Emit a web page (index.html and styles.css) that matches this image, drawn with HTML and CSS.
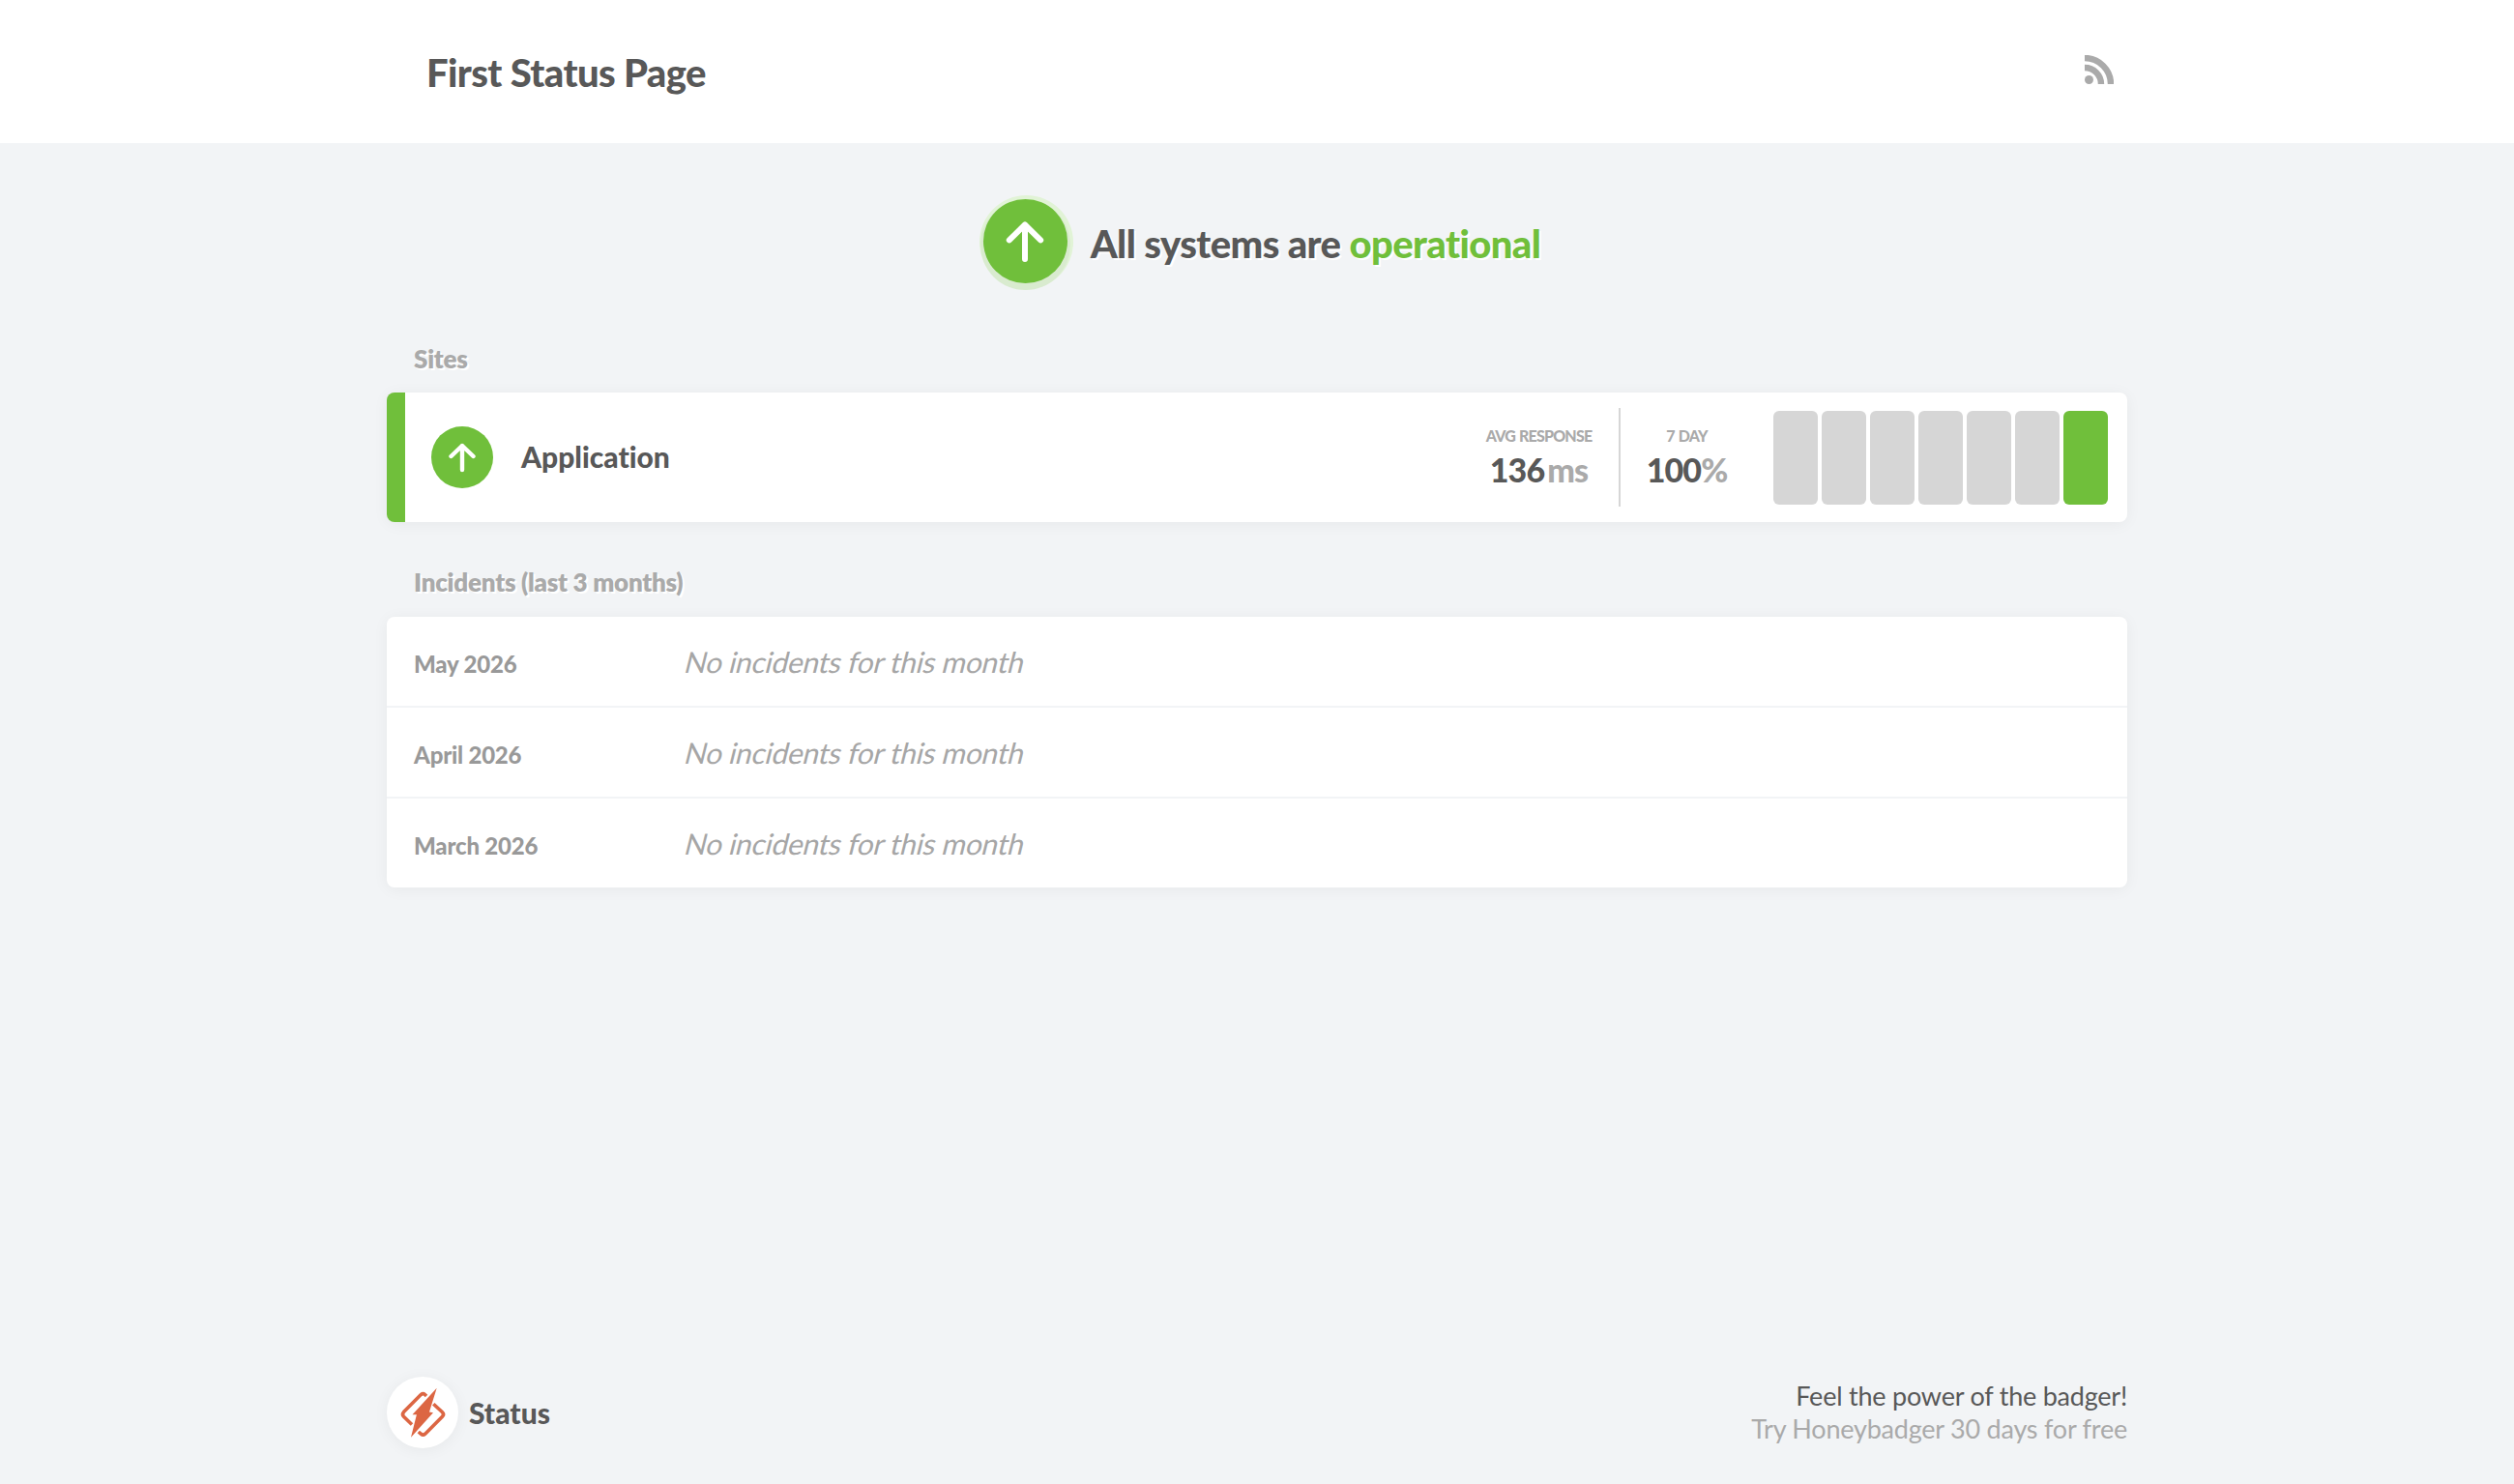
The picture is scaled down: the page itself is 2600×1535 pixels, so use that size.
FILE: index.html
```html
<!DOCTYPE html>
<html lang="en">

<head>
    <meta charset="UTF-8" />
    <meta name="viewport" content="width=device-width, initial-scale=1.0" />
    <title>First Status Page</title>
    <link rel="stylesheet" href="styles.css">
</head>

<body>
    <header class="header">
        <div class="wrap header-inner">
            <h1 class="title">First Status Page</h1>
            <a class="feed" href="#" aria-label="Feed">
                <svg width="30" height="30" viewBox="0 0 30 30">
                    <circle cx="4.5" cy="25.5" r="4.5" fill="#aaa" />
                    <path d="M0 13A17 17 0 0 1 17 30M0 3A27 27 0 0 1 27 30" fill="none" stroke="#aaa" stroke-width="6.4" />
                </svg>
            </a>
        </div>
    </header>

    <main class="wrap main">
        <div class="hero">
            <div class="badge badge-big">
                <svg width="40" height="44" viewBox="0 0 40 44">
                    <path d="M20 40V4.400M3.800 20.400L20 4.400L36.200 20.400" />
                </svg>
            </div>
            <h2 class="hero-text">All systems are <span class="green">operational</span></h2>
        </div>

        <h3 class="section-title">Sites</h3>
        <div class="card site">
            <div class="badge">
                <svg width="28" height="31" viewBox="0 0 28 31">
                    <path d="M14 28V3M2.5 14L14 3L25.5 14" />
                </svg>
            </div>
            <div class="site-name">Application</div>
            <div class="stat stat-response">
                <div class="stat-label">AVG RESPONSE</div>
                <div class="stat-value">136<span class="unit unit-ms">ms</span></div>
            </div>
            <div class="stat stat-week">
                <div class="stat-label">7 DAY</div>
                <div class="stat-value">100<span class="unit">%</span></div>
            </div>
            <div class="days">
                <div class="day"></div>
                <div class="day"></div>
                <div class="day"></div>
                <div class="day"></div>
                <div class="day"></div>
                <div class="day"></div>
                <div class="day day-up"></div>
            </div>
        </div>

        <h3 class="section-title section-incidents">Incidents (last 3 months)</h3>
        <div class="card incidents">
            <div class="row">
                <div class="month">May 2026</div>
                <div class="none">No incidents for this month</div>
            </div>
            <div class="row">
                <div class="month">April 2026</div>
                <div class="none">No incidents for this month</div>
            </div>
            <div class="row">
                <div class="month">March 2026</div>
                <div class="none">No incidents for this month</div>
            </div>
        </div>
    </main>

    <footer class="wrap footer">
        <div class="brand">
            <div class="logo">
                <svg width="74" height="74" viewBox="0 0 74 74">
                    <path d="M41 20L39.500 18.500Q37.500 16.800 35.300 18.600L17.500 36.600Q15.400 39 17.500 41.300L26 49.500M48.300 28.200L57.500 36.800Q59.700 39 57.500 41.300L39.700 59.200Q37.500 61.200 35.300 59.200L32.800 57" fill="none" stroke="#dc6643" stroke-width="3.6" />
                    <path d="M51.700 11.800L44 36.500L48 37.200L25 62.700L30.900 39.200H26.500Z" fill="#dc6643" />
                </svg>
            </div>
            <span class="brand-name">Status</span>
        </div>
        <div class="promo">
            <div>Feel the power of the badger!</div>
            <div class="promo-link">Try Honeybadger 30 days for free</div>
        </div>
    </footer>
</body>

</html>
```

FILE: styles.css
```css
* {
    box-sizing: border-box;
}

body {
    margin: 0;
    min-height: 100vh;
    display: flex;
    flex-direction: column;
    background-color: #f2f4f6;
    color: #585858;
    font-family: Lato, "Liberation Sans", sans-serif;
    font-variant-ligatures: none;
}

h1,
h2,
h3 {
    margin: 0;
}

.wrap {
    width: 1800px;
    margin: 0 auto;
}

.header {
    background-color: white;
}

.header-inner {
    height: 148px;
    padding: 0 14px 0 41px;
    display: flex;
    justify-content: space-between;
    align-items: center;
}

.title {
    font-size: 40px;
    font-weight: 900;
    line-height: 48px;
    padding-top: 2px;
    letter-spacing: -0.6px;
}

.feed {
    height: 30px;
    margin-bottom: 5px;
}

.feed svg,
.badge svg,
.logo svg {
    display: block;
}

/* overall status */
.hero {
    display: flex;
    align-items: center;
    justify-content: center;
    gap: 24px;
    padding: 58px 0 62px 10px;
}

.hero-text {
    font-size: 40px;
    font-weight: 900;
    line-height: 48px;
    padding-top: 5px;
    letter-spacing: -0.58px;
    text-shadow: 2px 2px 0 white;
}

.green {
    color: #70bf3b;
}

.badge {
    width: 64px;
    height: 64px;
    border-radius: 50%;
    background-color: #70bf3b;
    display: flex;
    align-items: center;
    justify-content: center;
}

.badge path {
    fill: none;
    stroke: white;
    stroke-width: 4.4;
    stroke-linecap: round;
    stroke-linejoin: round;
}

.badge-big {
    width: 87px;
    height: 87px;
    box-shadow: 0 4px 0 3px #d9ebcf, 1px 1px 0 5px #e1f3d6;
}

.badge-big path {
    stroke-width: 6;
}

.section-title {
    font-size: 26px;
    font-weight: 800;
    line-height: 32px;
    padding-left: 28px;
    margin-bottom: 19px;
    letter-spacing: -0.25px;
    color: #aaa;
    text-shadow: 2px 2px 0 white;
}

.section-incidents {
    margin-top: 46px;
    margin-bottom: 20px;
}

.card {
    background-color: white;
    border-radius: 8px;
    box-shadow: 0 2px 16px rgba(0, 0, 0, 0.05);
}

/* site row */
.site {
    height: 134px;
    border-left: 19px solid #70bf3b;
    padding: 0 20px 0 27px;
    display: flex;
    align-items: center;
}

.site-name {
    flex: 1;
    padding: 0 0 2px 29px;
    font-size: 30px;
    font-weight: 900;
}

.stat {
    height: 102px;
    text-align: center;
    padding-top: 19px;
}

.stat-response {
    width: 167px;
    border-right: 2px solid #d6d6d6;
}

.stat-week {
    width: 137px;
    margin-right: 20.5px;
}

.stat-label {
    font-size: 16px;
    font-weight: 900;
    line-height: 20px;
    letter-spacing: -0.8px;
    word-spacing: 1px;
    color: #aaa;
}

.stat-value {
    font-size: 34px;
    font-weight: 900;
    line-height: 42px;
    padding-top: 4px;
    letter-spacing: -0.9px;
}

.unit {
    color: #aaa;
}

.unit-ms {
    margin-left: 3px;
}

.days {
    display: flex;
    gap: 3.5px;
}

.day {
    width: 46.5px;
    height: 97px;
    border-radius: 6px;
    background-color: #d6d6d6;
}

.day-up {
    background-color: #70bf3b;
}

/* incidents */
.row {
    height: 94px;
    padding: 0 28px;
    display: flex;
    align-items: baseline;
    line-height: 92px;
    border-bottom: 2px solid #f2f4f6;
}

.row:last-child {
    border-bottom: none;
    height: 92px;
}

.month {
    width: 279px;
    font-size: 24px;
    font-weight: 900;
    letter-spacing: -0.2px;
    color: #999;
}

/* slanted upright face, the real italic has a different f */
.none {
    font-size: 30px;
    letter-spacing: -0.32px;
    color: #a6a6a6;
    transform: skewX(-14deg);
    transform-origin: 0 60%;
}

/* footer */
.footer {
    margin-top: auto;
    padding-bottom: 37px;
    display: flex;
    justify-content: space-between;
    align-items: center;
}

.brand {
    display: flex;
    align-items: center;
    gap: 11px;
}

.logo {
    width: 74px;
    height: 74px;
    border-radius: 50%;
    background-color: white;
    box-shadow: 0 2px 16px rgba(0, 0, 0, 0.05);
}

.brand-name {
    font-size: 30px;
    font-weight: 900;
}

.promo {
    text-align: right;
    font-size: 27px;
    line-height: 34px;
    letter-spacing: -0.22px;
}

.promo-link {
    color: #aaa;
}
```
